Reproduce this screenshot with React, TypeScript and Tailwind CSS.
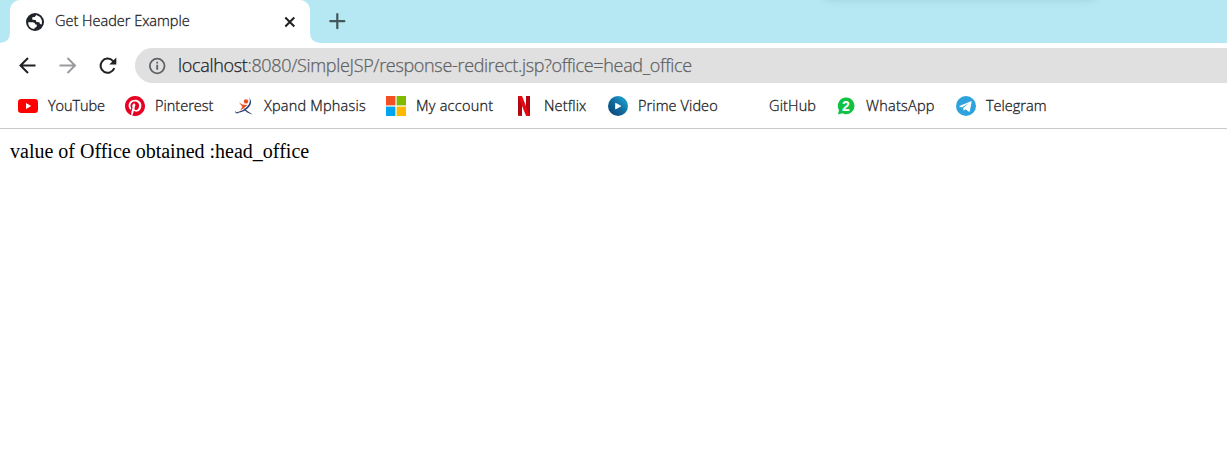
import type { ReactNode } from "react";

function Globe() {
  return (
    <svg className="h-5 w-5 shrink-0" viewBox="0 0 20 20">
      <circle cx="10" cy="10" r="9" fill="#202329" />
      <path d="M3.100 10.200 8 10.300q2.200 .2 2.300 2.100l1.400.2q.5 2-.6 2.700l-1.500.5-.2 1.300Q3.400 16.700 3.100 10.200Z" fill="#fff" />
      <path d="M11.200 3 9.700 5 7.300 5.300v2.500l3.300.1.900 2.200 2.800.2.700 1.800 1.700.3Q18.600 5.300 11.200 3Z" fill="#fff" />
    </svg>
  );
}

function YouTube() {
  return (
    <svg className="h-5 w-5" viewBox="0 0 20 20">
      <rect y="3" width="20" height="14" rx="3.200" fill="#f00" />
      <path d="m8 7 5.200 3L8 13Z" fill="#fff" />
    </svg>
  );
}

function Pinterest() {
  return (
    <svg className="h-5 w-5" viewBox="0 0 24 24">
      <circle cx="12" cy="12" r="11" fill="#fff" />
      <path fill="#e60023" d="M12 0C5.373 0 0 5.372 0 12c0 5.084 3.163 9.426 7.627 11.174-.105-.949-.2-2.405.042-3.441.218-.937 1.407-5.965 1.407-5.965s-.359-.719-.359-1.782c0-1.668.967-2.914 2.171-2.914 1.023 0 1.518.769 1.518 1.690 0 1.029-.655 2.568-.994 3.995-.283 1.194.599 2.169 1.777 2.169 2.133 0 3.772-2.249 3.772-5.495 0-2.873-2.064-4.882-5.012-4.882-3.414 0-5.418 2.561-5.418 5.207 0 1.031.397 2.138.893 2.738a.36.36 0 0 1 .083.345l-.333 1.360c-.053.22-.174.267-.402.161-1.499-.698-2.436-2.889-2.436-4.649 0-3.785 2.750-7.262 7.929-7.262 4.163 0 7.398 2.967 7.398 6.931 0 4.136-2.607 7.464-6.227 7.464-1.216 0-2.359-.631-2.750-1.378l-.748 2.853c-.271 1.043-1.002 2.350-1.492 3.146A12 12 0 1 0 12 0Z" />
    </svg>
  );
}

function Xpand() {
  return (
    <svg className="h-5 w-5" viewBox="0 0 20 20" fill="none">
      <path d="M15 1.700q3.400 3.400 1.200 7.600Q12.500 16 1.800 17.200l.1-.7Q11 15 14.800 8.600q2-3.800.2-6.900Z" fill="#23386f" />
      <path d="M10.300 12.300q3.200 3.200 8.400 6.300-5.500-.8-9.300-5.500ZM1.800 14.200q-1.200 2.400 2.700 2.500l-.2.800Q-.1 17.300 1.800 14.200Z" fill="#384a78" />
      <circle cx="12" cy="5.400" r="2.200" fill="#ee4b20" />
      <path d="M5 6q2 2.500 4.600 2.700l3.900.4-3 2.500-4.500 3.200 2.400-4.100Q6.200 8.600 5 6Z" fill="#ee4b20" />
    </svg>
  );
}

function Microsoft() {
  return (
    <svg className="h-5 w-5" viewBox="0 0 20 20">
      <path fill="#f25022" d="M0 0h9.400v9.400H0z" /><path fill="#7fba00" d="M10.600 0H20v9.400h-9.400z" />
      <path fill="#00a4ef" d="M0 10.600h9.400V20H0z" /><path fill="#ffb900" d="M10.600 10.600H20V20h-9.400z" />
    </svg>
  );
}

function Netflix() {
  return (
    <svg className="h-5 w-5" viewBox="0 0 20 20">
      <path d="M4 0h4v20l-4-.2ZM12 0h4v20l-4-.2Z" fill="#b20710" />
      <path d="M4 0h4l8 20q-2-.3-4-.2Z" fill="#e50914" />
    </svg>
  );
}

function Prime() {
  return (
    <svg className="h-5 w-5" viewBox="0 0 20 20">
      <defs>
        <linearGradient id="prime" x1="0" y1="1" x2="1" y2="0">
          <stop stopColor="#0a3f70" /><stop offset=".5" stopColor="#116b9f" /><stop offset="1" stopColor="#20b3dc" />
        </linearGradient>
      </defs>
      <circle cx="10" cy="10" r="10" fill="url(#prime)" />
      <path d="M7.600 7.200v5.800l5.200-2.900Z" fill="#fff" stroke="#fff" strokeWidth=".8" strokeLinejoin="round" />
    </svg>
  );
}

function WhatsApp() {
  return (
    <span className="relative flex h-5 w-5 items-center justify-center">
      <svg className="absolute inset-0 h-5 w-5" viewBox="0 0 20 20">
        <path d="M10.200 1.600a8.300 8.300 0 1 1-3.800 15.700L2 18.400l1-4.300A8.300 8.300 0 0 1 10.200 1.600Z" fill="#0fc244" />
      </svg>
      <span className="relative font-['Liberation_Sans',sans-serif] text-[14px] leading-none font-bold text-white">2</span>
    </span>
  );
}

function Telegram() {
  return (
    <svg className="h-5 w-5" viewBox="0 0 20 20">
      <circle cx="10" cy="10" r="10" fill="#2da2dc" />
      <path d="M3.300 10 15 5.300q.8-.2.6.7l-1.800 9.200q-.2.900-1.100.4l-3.400-2.400-1.600 1.600-.5-2.800 5.800-5-7.200 4.400-2.400-.8q-.5-.3-.1-.6Z" fill="#fff" />
    </svg>
  );
}

type Bookmark = { label: string; icon: ReactNode; box: string; text: string };

const bookmarks: Bookmark[] = [
  { label: "YouTube", icon: <YouTube />, box: "w-[107px]", text: "tracking-[-0.1px]" },
  { label: "Pinterest", icon: <Pinterest />, box: "w-[109px]", text: "tracking-[0px]" },
  { label: "Xpand Mphasis", icon: <Xpand />, box: "w-[152px]", text: "tracking-[0.2px]" },
  { label: "My account", icon: <Microsoft />, box: "w-[128px]", text: "tracking-[0.25px]" },
  { label: "Netflix", icon: <Netflix />, box: "w-[94px]", text: "tracking-[0.15px]" },
  { label: "Prime Video", icon: <Prime />, box: "w-[131px]", text: "tracking-[0.1px]" },
  { label: "GitHub", icon: null, box: "w-[97px]", text: "tracking-[0.15px]" },
  { label: "WhatsApp", icon: <WhatsApp />, box: "w-[120px]", text: "tracking-[0.25px]" },
  { label: "Telegram", icon: <Telegram />, box: "w-[110px]", text: "tracking-[0px]" },
];

function TabStrip() {
  return (
    <div className="relative flex h-[43px] overflow-hidden bg-[#b5e8f3]">
      <svg className="h-[43px] w-[10px] shrink-0" viewBox="0 0 10 43">
        <path d="M0 43Q10 42 10 33V43Z" fill="#fff" />
      </svg>
      <div className="flex w-[300px] shrink-0 items-center rounded-t-[10px] bg-white pl-[15px]">
        <Globe />
        <span className="-mt-[2px] ml-[10px] w-[225px] whitespace-nowrap text-[14.500px] font-light text-[#202124] [-webkit-text-stroke:0.3px]">Get Header Example</span>
        <svg className="h-5 w-5 shrink-0" viewBox="0 0 20 20">
          <path d="m5.300 5.500 9 9m0-9-9 9" stroke="#202124" strokeWidth="2" />
        </svg>
      </div>
      <svg className="h-[43px] w-[10px] shrink-0" viewBox="0 0 10 43">
        <path d="M0 33Q0 42 10 43H0Z" fill="#fff" />
      </svg>
      <svg className="mt-[11px] ml-[7px] h-5 w-5" viewBox="0 0 20 20">
        <path d="M10.300 3.200v14M3.300 10.200h14" stroke="#42575b" strokeWidth="2.200" strokeLinecap="round" />
      </svg>
      <div className="absolute top-[-12px] left-[825px] h-[10px] w-[270px] shadow-[0_1px_9px_rgba(80,120,130,0.25)]" />
    </div>
  );
}

function Toolbar() {
  return (
    <div className="flex h-[45px] items-center pl-[17px]">
      <div className="flex w-[118px] items-center gap-5">
        <svg className="h-5 w-5" viewBox="0 0 20 20" fill="none" stroke="#202124" strokeWidth="2">
          <path d="M18.500 9.500H3.500M11 2 3.500 9.500 11 17" />
        </svg>
        <svg className="h-5 w-5" viewBox="0 0 20 20" fill="none" stroke="#999b9e" strokeWidth="2">
          <path d="M2.500 9.500H17M10.500 2 18 9.500 10.500 17" />
        </svg>
        <svg className="h-5 w-5" viewBox="0 0 20 20" fill="none">
          <path d="M17.300 12.200a7.100 7.100 0 1 1-1.400-7.300l1.300 1.500" stroke="#202124" strokeWidth="2" />
          <path d="M19.300 1.500v7h-7Z" fill="#202124" />
        </svg>
      </div>
      <div className="flex h-[35px] flex-1 items-center rounded-l-full bg-[#e0e0e0] pl-3">
        <svg className="h-5 w-5" viewBox="0 0 20 20" fill="none">
          <circle cx="10.200" cy="10" r="7.300" stroke="#5f6368" strokeWidth="1.800" />
          <path d="M10.200 8.800v5M10.200 5.800v1.800" stroke="#5f6368" strokeWidth="1.900" />
        </svg>
        <span className="ml-[11px] whitespace-nowrap text-[18px] font-light tracking-[-0.325px] text-[#5f6163] [-webkit-text-stroke:0.25px]"><span className="text-[#202124]">localhost</span>:8080/SimpleJSP/response-redirect.jsp?office=head_office</span>
      </div>
    </div>
  );
}

export default function App() {
  return (
    <div className="h-[465px] w-[1227px] overflow-hidden bg-white font-['Open_Sans',sans-serif]">
      <TabStrip />
      <Toolbar />
      <nav className="flex h-[41px] border-b border-[#c9cacb] pb-[4px] pl-[18px]">
        {bookmarks.map((b) => (
          <div key={b.label} className={`${b.box} flex shrink-0 items-center gap-[10px]`}>
            <div className="h-5 w-5 shrink-0">{b.icon}</div>
            <span className={`${b.text} whitespace-nowrap text-[14.500px] font-light text-[#202124] [-webkit-text-stroke:0.3px]`}>{b.label}</span>
          </div>
        ))}
      </nav>
      <main className="px-[10px] pt-[10.500px] font-['Liberation_Serif',serif] text-[20px] leading-[23px] text-black">
        value of Office obtained :head_office
      </main>
    </div>
  );
}
